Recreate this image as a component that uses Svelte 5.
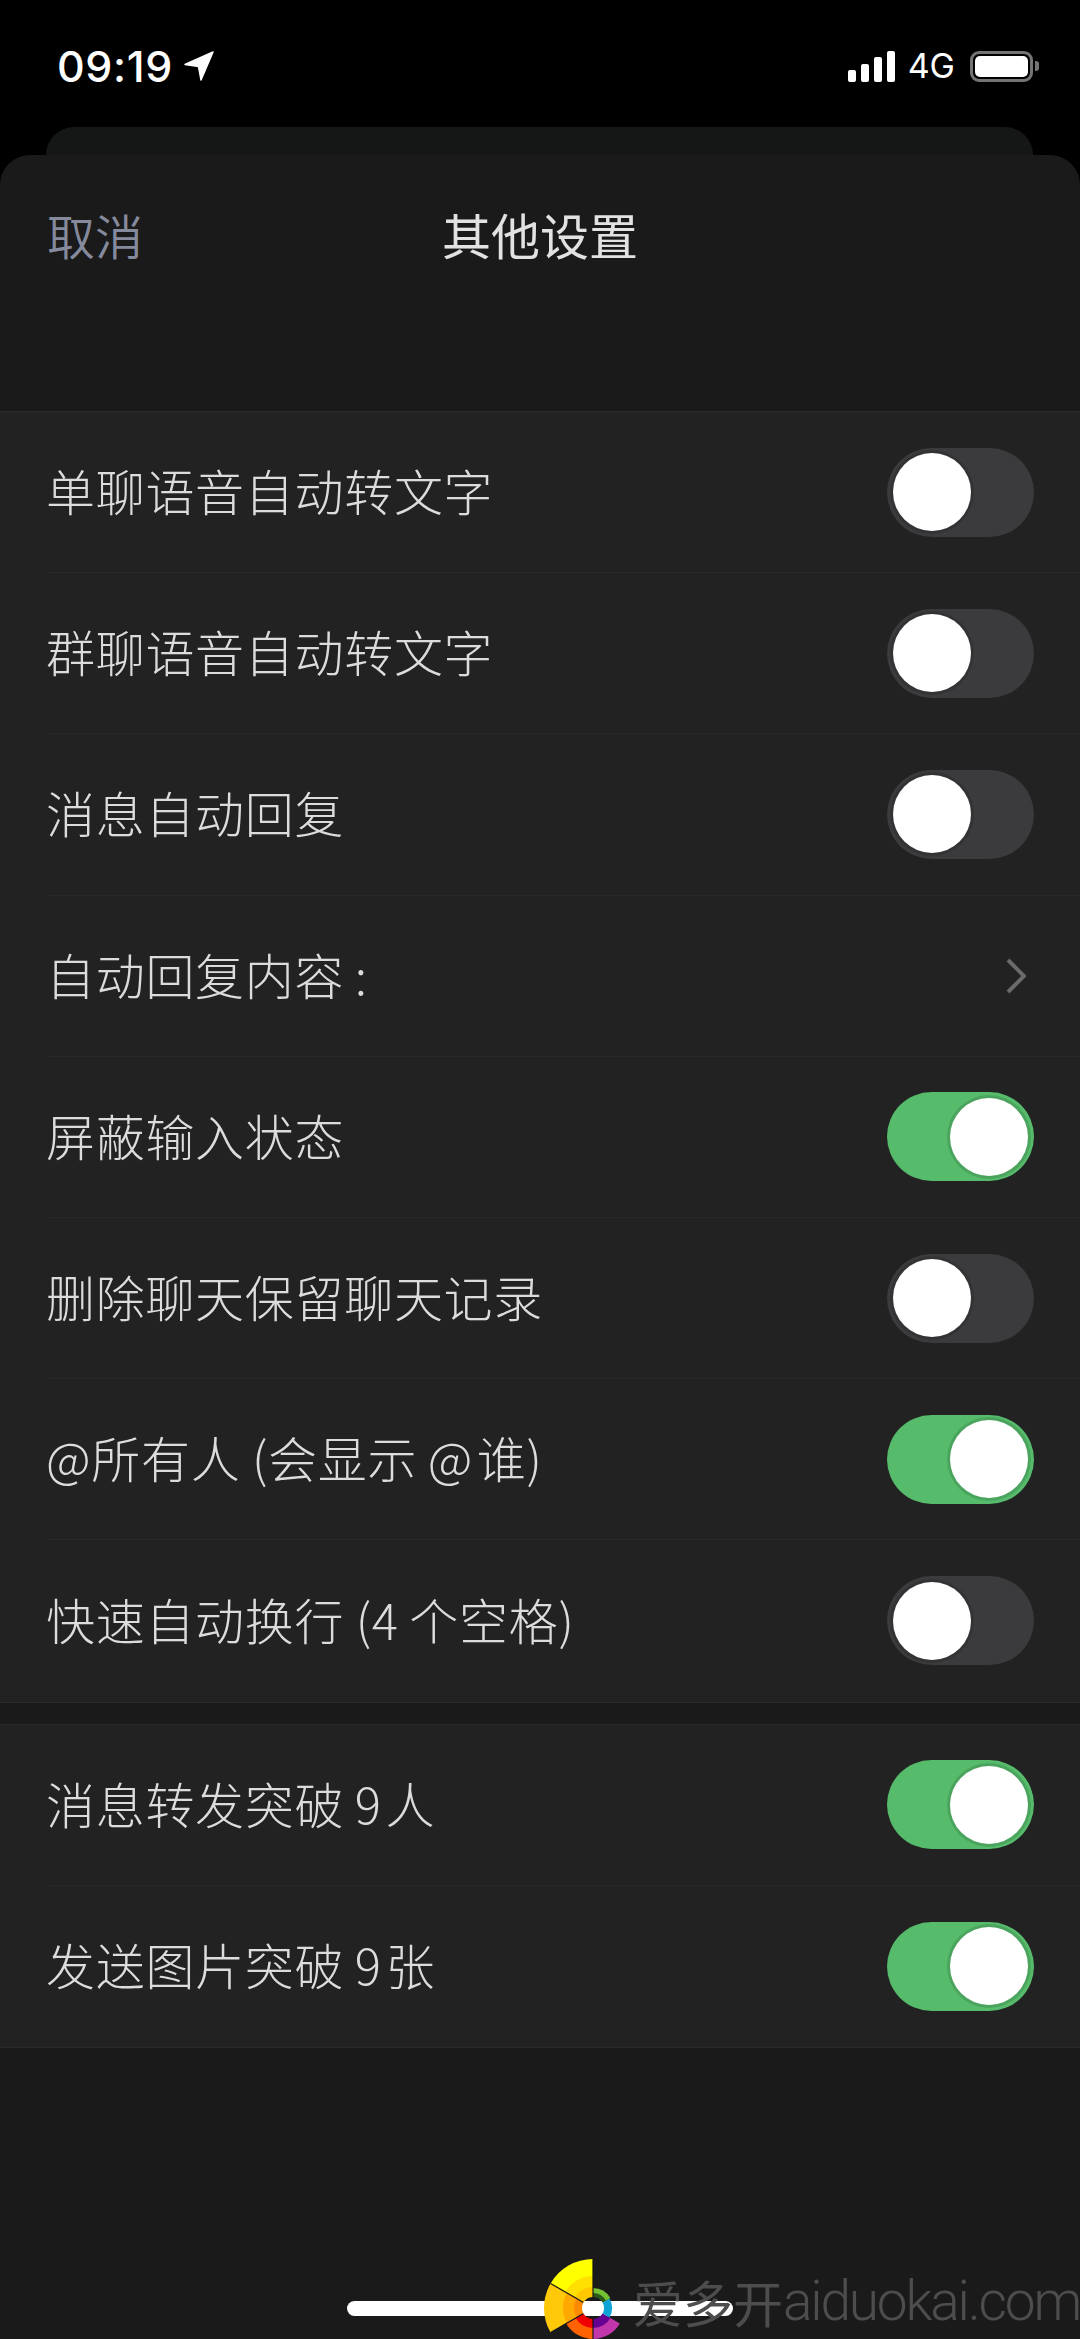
<script>
	const groups = [
		[
			{ label: "单聊语音自动转文字", on: false },
			{ label: "群聊语音自动转文字", on: false },
			{ label: "消息自动回复", on: false },
			{ label: "自动回复内容\u2009:", link: true },
			{ label: "屏蔽输入状态", on: true },
			{ label: "删除聊天保留聊天记录", on: false },
			{ label: "@所有人 (会显示\u2009@\u200a谁)", on: true },
			{ label: "快速自动换行 (4\u2009个空格)", on: false }
		],
		[
			{ label: "消息转发突破\u20099\u200a人", on: true },
			{ label: "发送图片突破\u20099\u200a张", on: true }
		]
	];

	// pie slices of the watermark logo, angles in degrees clockwise from 12 o'clock
	const slices = [
		{ from: -60, to: 0, bands: [[49, "#ffff00"], [32, "#ffe000"], [21, "#ffc800"]] },
		{ from: -120, to: -60, bands: [[49, "#ffc808"], [30, "#ffa800"], [19, "#ff8a00"]] },
		{ from: -180, to: -120, bands: [[31, "#ff6200"], [20, "#f00000"]] },
		{ from: 120, to: 180, bands: [[31, "#c236ac"], [20, "#650090"]] },
		{ from: 60, to: 120, bands: [[19, "#0ea5d6"]] },
		{ from: 0, to: 60, bands: [[20, "#74c132"], [15, "#2c5a18"]] }
	];

	function arc(r, from, to) {
		const a = ((from - 90) * Math.PI) / 180;
		const b = ((to - 90) * Math.PI) / 180;
		const x0 = (r * Math.cos(a)).toFixed(2);
		const y0 = (r * Math.sin(a)).toFixed(2);
		const x1 = (r * Math.cos(b)).toFixed(2);
		const y1 = (r * Math.sin(b)).toFixed(2);
		return `M0 0L${x0} ${y0}A${r} ${r} 0 0 1 ${x1} ${y1}Z`;
	}
</script>

<div class="phone">
	<header class="status">
		<div class="time">
			<span>09:19</span>
			<svg width="30" height="30" viewBox="0 0 30 30">
				<path d="M29 1 1 13.5 14.5 15.5 17 29Z" fill="#fff" stroke="#fff" stroke-width="1.5" stroke-linejoin="round" />
			</svg>
		</div>
		<div class="indicators">
			<div class="signal">
				<i class="b1"></i><i class="b2"></i><i class="b3"></i><i class="b4"></i>
			</div>
			<span class="net">4G</span>
			<div class="battery"><b></b></div>
			<div class="nub"></div>
		</div>
	</header>

	<div class="back-card"></div>

	<section class="sheet">
		<nav class="nav">
			<span class="cancel">取消</span>
			<span class="title">其他设置</span>
		</nav>

		<div class="groups">
			{#each groups as rows}
				<div class="group">
					{#each rows as row}
						<div class="row">
							<div class="row-body">
								<span class="label">{row.label}</span>
								{#if row.link}
									<svg class="chevron" width="20" height="36" viewBox="0 0 20 36">
										<path d="M2 2 18 18 2 34" fill="none" stroke="#6a6a6a" stroke-width="4" />
									</svg>
								{:else}
									<div class="toggle" class:on={row.on}><div class="knob"></div></div>
								{/if}
							</div>
						</div>
					{/each}
				</div>
			{/each}
		</div>

		<div class="home"></div>
	</section>

	<svg class="logo" width="100" height="81" viewBox="-50 -50 100 81">
		{#each slices as s}
			{#each s.bands as [r, color]}
				<path d={arc(r, s.from, s.to)} fill={color} />
			{/each}
		{/each}
		<path d="M0 -49V-11M-42.4 -24.5-9.5 -5.5M-42.4 24.5-9.5 5.5M0 11V31" stroke="#161616" stroke-width="1.2" fill="none" />
	</svg>
	<div class="hole"></div>
	<div class="watermark">爱多开<span>aiduokai.com</span></div>
</div>

<style>
	:global(body) {
		background: #000;
	}

	.phone {
		position: relative;
		display: flex;
		flex-direction: column;
		height: 2339px;
		overflow: hidden;
		background: #000;
		font-family: "Noto Sans CJK SC", "Noto Sans", sans-serif;
	}

	.status {
		display: flex;
		justify-content: space-between;
		align-items: flex-start;
		box-sizing: border-box;
		height: 127px;
		padding: 45px 41px 0 57px;
		flex: none;
		color: #fff;
		font-family: Inter, "Liberation Sans", sans-serif;
	}

	.time {
		display: flex;
		align-items: center;
		gap: 11px;
		font-size: 43px;
		font-weight: 500;
		line-height: 42px;
		letter-spacing: 0.6px;
	}

	.indicators {
		display: flex;
		align-items: center;
		height: 42px;
	}

	.signal {
		display: flex;
		align-items: flex-end;
		gap: 5px;
		height: 31px;
		margin-right: 13px;
	}

	.signal i {
		display: block;
		width: 8px;
		border-radius: 2px;
		background: #fff;
	}

	.b1 { height: 12px; }
	.b2 { height: 18px; }
	.b3 { height: 25px; }
	.b4 { height: 31px; }

	.net {
		font-size: 34px;
		line-height: 42px;
		margin-right: 15px;
	}

	.battery {
		box-sizing: border-box;
		width: 63px;
		height: 31px;
		padding: 2px;
		border: 3px solid #747474;
		border-radius: 9px;
	}

	.battery b {
		display: block;
		height: 100%;
		border-radius: 5px;
		background: #fff;
	}

	.nub {
		width: 4px;
		height: 10px;
		margin-left: 2px;
		border-radius: 0 3px 3px 0;
		background: #747474;
	}

	.back-card {
		flex: none;
		height: 60px;
		margin: 0 47px -32px 46px;
		border-radius: 28px 28px 0 0;
		background: #151616;
	}

	.sheet {
		position: relative;
		flex: 1;
		display: flex;
		flex-direction: column;
		border-radius: 30px 30px 0 0;
		background: #1a1a1a;
	}

	.nav {
		position: relative;
		display: flex;
		align-items: center;
		justify-content: center;
		flex: none;
		height: 157px;
		margin-bottom: 99px;
	}

	.cancel {
		position: absolute;
		left: 47px;
		font-size: 48px;
		font-weight: 350;
		color: #858a9d;
	}

	.title {
		font-size: 49px;
		font-weight: 400;
		color: #e2e2e2;
	}

	.groups {
		display: flex;
		flex-direction: column;
		gap: 21px;
	}

	.group {
		border-top: 1px solid #2a2a2a;
		border-bottom: 1px solid #2a2a2a;
		background: #222;
	}

	.row {
		height: 161.2px;
		padding-left: 48px;
	}

	.row-body {
		box-sizing: border-box;
		display: flex;
		align-items: center;
		justify-content: space-between;
		height: 100%;
		padding-right: 46px;
		border-bottom: 1px solid #282828;
	}

	.row:last-child .row-body {
		border-bottom: 0;
	}

	.label {
		margin: 0 0 5px -2px;
		font-size: 49px;
		font-weight: 300;
		letter-spacing: 0.7px;
		color: #dcdcdc;
		white-space: pre;
	}

	.chevron {
		margin-right: 8px;
	}

	.toggle {
		box-sizing: border-box;
		display: flex;
		align-items: center;
		width: 147px;
		height: 89px;
		padding: 0 6px;
		border-radius: 45px;
		background: #3b3b3d;
	}

	.toggle.on {
		justify-content: flex-end;
		background: #56bb6b;
	}

	.knob {
		width: 78px;
		height: 78px;
		border-radius: 50%;
		background: #fff;
		box-shadow: 0 0 0 3px rgba(0, 0, 0, 0.12);
	}

	.home {
		flex: none;
		align-self: center;
		width: 386px;
		height: 15px;
		margin: auto 0 23px -1px;
		border-radius: 8px;
		background: #fff;
	}

	/* watermark sits on top of the home bar */
	.logo {
		position: absolute;
		left: 543px;
		top: 2258px;
	}

	.hole {
		position: absolute;
		left: 582px;
		top: 2297px;
		width: 22px;
		height: 22px;
		border-radius: 50%;
		background: linear-gradient(#1a1a1a 4px, #fff 4px, #fff 19px, #1a1a1a 19px);
	}

	.watermark {
		position: absolute;
		left: 633px;
		top: 2266px;
		display: flex;
		font-size: 50px;
		line-height: 70px;
		white-space: nowrap;
		color: #4d4d4d;
	}

	.watermark span {
		font-family: Roboto, sans-serif;
		font-size: 55px;
		font-weight: 300;
		letter-spacing: -2.2px;
	}
</style>
